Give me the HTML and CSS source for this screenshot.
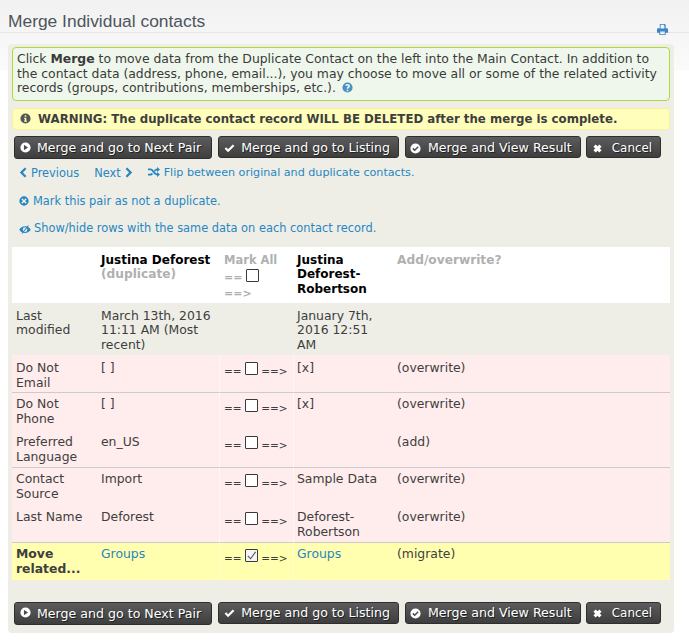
FILE: index.html
```html
<!DOCTYPE html>
<html lang="en">
<head>
  <meta charset="UTF-8" />
  <title>Merge Individual contacts</title>
  <link rel="stylesheet" href="styles.css">
</head>
<body>
  <svg class="sprite" width="0" height="0">
    <symbol id="i-play" viewBox="0 0 14 14"><path fill-rule="evenodd" d="M7 .5a6.5 6.5 0 1 0 0 13 6.500 6.500 0 0 0 0-13zM5 3.600l5.200 3.400L5 10.400z"/></symbol>
    <symbol id="i-check" viewBox="0 0 14 14"><path d="M5.200 11.800.8 7.400l2-2 2.400 2.400 6-6 2 2z"/></symbol>
    <symbol id="i-check-c" viewBox="0 0 14 14"><path fill-rule="evenodd" d="M7 .5a6.500 6.500 0 1 0 0 13 6.500 6.500 0 0 0 0-13zM6 10.600 2.900 7.500l1.400-1.400L6 7.800l3.700-3.700 1.400 1.400z"/></symbol>
    <symbol id="i-times" viewBox="0 0 14 14"><path d="M4.700 1.800 7 4.100l2.300-2.300 2.900 2.900L9.900 7l2.300 2.300-2.900 2.900L7 9.900l-2.300 2.300-2.900-2.900L4.100 7 1.800 4.700z"/></symbol>
    <symbol id="i-prev" viewBox="0 0 8 12"><path d="M6 .5 7.700 2.200 3.900 6l3.800 3.800L6 11.500.5 6z"/></symbol>
    <symbol id="i-next" viewBox="0 0 8 12"><path d="M2 .5.300 2.200 4.100 6 .3 9.800 2 11.500 7.500 6z"/></symbol>
    <symbol id="i-random" viewBox="0 0 12 10"><path d="M0 1.500h2.500c1.600 0 2.500 1 3.500 2.300C7 5 7.700 6.500 9 6.500V5l3 2.500L9 10V8.300c-2 0-3.200-1.500-4.300-3C3.900 4.200 3.300 3.300 2.400 3.300H0zM9 0l3 2.500L9 5V3.500c-.8 0-1.400.5-2 1.100L6 3.300C6.800 2.400 7.700 1.700 9 1.700zM0 6.700h2.400c.6 0 1-.4 1.500-.9l1.100 1.400C4.300 8 3.500 8.500 2.500 8.500H0z"/></symbol>
    <symbol id="i-times-c" viewBox="0 0 14 14"><path fill-rule="evenodd" d="M7 .5a6.500 6.500 0 1 0 0 13 6.500 6.500 0 0 0 0-13zM4.800 3.300 7 5.500l2.200-2.200 1.500 1.500L8.500 7l2.200 2.200-1.500 1.500L7 8.500l-2.200 2.200-1.500-1.500L5.500 7 3.300 4.800z"/></symbol>
    <symbol id="i-eye" viewBox="0 0 14 10"><path fill-rule="evenodd" d="M7 1.200C4 1.200 1.600 3 .3 5.200 1.600 7.400 4 9 7 9s5.400-1.600 6.700-3.800C12.400 3 10 1.200 7 1.200zm0 1.300a2.700 2.700 0 1 1 0 5.400 2.700 2.700 0 0 1 0-5.400z"/><path d="M10.500 0l1 .7L4 10l-1-.7z"/></symbol>
    <symbol id="i-print" viewBox="0 0 12 12"><path fill-rule="evenodd" d="M3 0h5.500L9.500 1v3.500h1.200c.7 0 1.300.6 1.300 1.300V9.500H9.500V12h-7V9.500H0V5.800c0-.7.600-1.300 1.300-1.300H3zm.9.900v4h4.200V2.200L7.300.900zM3.500 8.200v2.900h5V8.200z"/></symbol>
    <symbol id="i-help" viewBox="0 0 14 14"><path fill-rule="evenodd" d="M7 .5a6.500 6.500 0 1 0 0 13 6.500 6.500 0 0 0 0-13zM6 9.800h2v2H6zM7 2.500c1.900 0 3.200 1 3.200 2.500 0 1.100-.6 1.700-1.300 2.200-.6.400-.9.700-.9 1.500H6c0-1.300.5-2 1.300-2.600.5-.4.800-.6.800-1.100 0-.4-.4-.7-1.100-.7-.6 0-1.200.3-1.700.9L3.900 3.900C4.700 3 5.700 2.500 7 2.500z"/></symbol>
    <symbol id="i-info" viewBox="0 0 14 14"><path fill-rule="evenodd" d="M7 .5a6.500 6.500 0 1 0 0 13 6.500 6.500 0 0 0 0-13zM6 2.800h2v2H6zM5.300 6h2.700v4h.9v1.200H5.200V10H6V7.200h-.7z"/></symbol>
  </svg>

  <header class="page-head">
    <h1>Merge Individual contacts</h1>
    <a class="print" href="#"><svg class="ico"><use href="#i-print"/></svg></a>
  </header>

  <main class="panel">
    <div class="help">
      Click <strong>Merge</strong> to move data from the Duplicate Contact on the left into the Main Contact. In addition to the contact data (address, phone, email...), you may choose to move all or some of the related activity records (groups, contributions, memberships, etc.).
      <svg class="ico help-ico"><use href="#i-help"/></svg>
    </div>

    <div class="warning">
      <svg class="ico warn-ico"><use href="#i-info"/></svg>
      WARNING: The duplicate contact record WILL BE DELETED after the merge is complete.
    </div>

    <div class="buttons">
      <button class="btn btn-first" type="button"><svg class="ico"><use href="#i-play"/></svg>Merge and go to Next Pair</button>
      <button class="btn" type="button"><svg class="ico"><use href="#i-check"/></svg>Merge and go to Listing</button>
      <button class="btn btn-view" type="button"><svg class="ico"><use href="#i-check-c"/></svg>Merge and View Result</button>
      <button class="btn btn-cancel" type="button"><svg class="ico"><use href="#i-times"/></svg>Cancel</button>
    </div>

    <div class="nav-links">
      <a href="#"><svg class="ico chev"><use href="#i-prev"/></svg>Previous</a>
      <a href="#">Next<svg class="ico chev chev-r"><use href="#i-next"/></svg></a>
      <a class="flip" href="#"><svg class="ico rnd"><use href="#i-random"/></svg>Flip between original and duplicate contacts.</a>
    </div>
    <div class="link-row link-mark"><a href="#"><svg class="ico small"><use href="#i-times-c"/></svg>Mark this pair as not a duplicate.</a></div>
    <div class="link-row link-show"><a href="#"><svg class="ico eye"><use href="#i-eye"/></svg>Show/hide rows with the same data on each contact record.</a></div>

    <table class="merge">
      <colgroup>
        <col class="c-label"><col class="c-dup"><col class="c-mark"><col class="c-main"><col class="c-add">
      </colgroup>
      <thead>
        <tr>
          <th></th>
          <th><span class="name">Justina Deforest</span><br>(duplicate)</th>
          <th class="mark-all">Mark All<span class="arrows">== <span class="box box-head"></span><br>==&gt;</span></th>
          <th><span class="name">Justina Deforest-Robertson</span></th>
          <th>Add/overwrite?</th>
        </tr>
      </thead>
      <tbody>
        <tr class="row-plain">
          <td>Last modified</td>
          <td>March 13th, 2016 11:11 AM (Most recent)</td>
          <td></td>
          <td>January 7th, 2016 12:51 AM</td>
          <td></td>
        </tr>
        <tr class="row-diff line row-email">
          <td>Do Not Email</td>
          <td>[ ]</td>
          <td class="mark">== <span class="box"></span> ==&gt;</td>
          <td class="sep">[x]</td>
          <td>(overwrite)</td>
        </tr>
        <tr class="row-diff">
          <td>Do Not Phone</td>
          <td>[ ]</td>
          <td class="mark">== <span class="box"></span> ==&gt;</td>
          <td class="sep">[x]</td>
          <td>(overwrite)</td>
        </tr>
        <tr class="row-diff line row-lang">
          <td>Preferred Language</td>
          <td>en_US</td>
          <td class="mark">== <span class="box"></span> ==&gt;</td>
          <td class="sep"></td>
          <td>(add)</td>
        </tr>
        <tr class="row-diff">
          <td>Contact Source</td>
          <td>Import</td>
          <td class="mark">== <span class="box"></span> ==&gt;</td>
          <td class="sep">Sample Data</td>
          <td>(overwrite)</td>
        </tr>
        <tr class="row-diff line">
          <td>Last Name</td>
          <td>Deforest</td>
          <td class="mark">== <span class="box"></span> ==&gt;</td>
          <td class="sep">Deforest-Robertson</td>
          <td>(overwrite)</td>
        </tr>
        <tr class="row-move">
          <td><strong>Move related...</strong></td>
          <td><a href="#">Groups</a></td>
          <td class="mark">== <span class="box box-on"><svg viewBox="0 0 12 12"><path d="M2 6.500 5 9.500 10.500 2" fill="none" stroke="#555" stroke-width="1.200"/></svg></span> ==&gt;</td>
          <td class="sep"><a href="#">Groups</a></td>
          <td>(migrate)</td>
        </tr>
      </tbody>
    </table>

    <div class="buttons buttons-bottom">
      <button class="btn btn-first" type="button"><svg class="ico"><use href="#i-play"/></svg>Merge and go to Next Pair</button>
      <button class="btn" type="button"><svg class="ico"><use href="#i-check"/></svg>Merge and go to Listing</button>
      <button class="btn btn-view" type="button"><svg class="ico"><use href="#i-check-c"/></svg>Merge and View Result</button>
      <button class="btn btn-cancel" type="button"><svg class="ico"><use href="#i-times"/></svg>Cancel</button>
    </div>
  </main>
</body>
</html>
```

FILE: styles.css
```css
* {
  box-sizing: border-box;
  margin: 0;
  padding: 0;
}

body {
  font-family: "DejaVu Sans", Verdana, sans-serif;
  font-size: 12.4px;
  line-height: 14.5px;
  color: #3e3e3e;
  background: linear-gradient(#f1f1f1, #fbfbfb 70px, #fff 71px);
  height: 642px;
  overflow: hidden;
}

a {
  color: #2786c2;
  text-decoration: none;
}

.sprite {
  display: block;
}

.ico {
  display: inline-block;
  width: 14px;
  height: 14px;
  fill: currentColor;
  vertical-align: -2px;
}

.page-head {
  height: 33px;
  display: flex;
  justify-content: space-between;
  border-bottom: 1px solid #e6e6e6;
  padding: 11px 21px 0 8px;
}

.page-head h1 {
  font-family: "Liberation Sans", Arial, sans-serif;
  font-weight: normal;
  font-size: 17.4px;
  line-height: 20px;
  color: #4e545c;
}

.print {
  color: #3d85c6;
  padding-top: 13px;
  line-height: 0;
}

.print .ico {
  width: 11px;
  height: 11px;
  vertical-align: top;
}

.panel {
  margin: 11px 15px 0 8px;
  height: 589px;
  background: #eeeee6;
  border-radius: 4px;
  padding: 3px 4px 0;
}

.help {
  height: 54px;
  padding: 4px 4px;
  background: #eff7ec;
  border: 1px solid #aedb3c;
  border-radius: 4px;
  color: #3a3a3a;
}

.help-ico {
  width: 11px;
  height: 11px;
  margin-left: 2px;
  color: #4a90c4;
  vertical-align: -1px;
}

.warning {
  height: 22px;
  margin-top: 7px;
  padding: 3px 7px;
  background: #ffffbb;
  border: 1px solid #f4f39b;
  border-radius: 4px;
  font-size: 11.78px;
  font-weight: bold;
  color: #3e3e3e;
  white-space: nowrap;
}

.warn-ico {
  width: 11px;
  height: 11px;
  margin-right: 3px;
  color: #555;
  vertical-align: -1px;
}

.buttons {
  display: flex;
  align-items: flex-start;
  gap: 6px;
  margin: 6px 0 0 2px;
}

.buttons-bottom {
  margin-top: 22px;
}

.btn {
  display: flex;
  align-items: center;
  gap: 6px;
  height: 22px;
  padding: 2px 8px 0 5px;
  font: inherit;
  font-size: 12.6px;
  color: #fff;
  white-space: nowrap;
  text-shadow: 1px 1px 0 #222;
  background: linear-gradient(#5c5c5c, #3e3e3e);
  border: 1px solid #2e2e2e;
  border-radius: 3px;
}

.btn .ico {
  width: 11px;
  height: 11px;
}

.btn-first {
  height: 23px;
  padding-right: 10px;
}

.btn-first .ico {
  margin-bottom: 3px;
}

.btn-view {
  gap: 7px;
  padding: 2px 8px 0 4px;
}

.btn-cancel {
  gap: 9px;
  margin-left: -1px;
  font-size: 11.9px;
}

.nav-links {
  display: flex;
  gap: 15px;
  margin: 7px 0 0 7px;
  font-size: 11.4px;
}

.flip {
  font-size: 11.15px;
}

.chev {
  width: 8px;
  height: 11px;
  margin-right: 4px;
  vertical-align: -1px;
}

.chev-r {
  margin: 0 0 0 4px;
}

.rnd {
  width: 12px;
  height: 10px;
  margin-right: 4px;
  vertical-align: -1px;
}

.link-row {
  margin-left: 7px;
  font-size: 11.4px;
}

.link-mark {
  margin-top: 13px;
}

.link-show {
  margin-top: 13px;
}

.small {
  width: 10px;
  height: 10px;
  margin-right: 4px;
  vertical-align: -1px;
}

.eye {
  width: 12px;
  height: 9px;
  margin-right: 3px;
  vertical-align: -2px;
}

.merge {
  width: 658px;
  height: 333px;
  margin-top: 11px;
  table-layout: fixed;
  border-collapse: separate;
  border-spacing: 0;
}

.c-label { width: 85px; }
.c-dup { width: 122px; }
.c-mark { width: 74px; }
.c-main { width: 100px; }

.merge th,
.merge td {
  padding: 3px 4px 0;
  text-align: left;
  vertical-align: top;
}

.merge th {
  height: 56px;
  background: #fff;
  padding-top: 6px;
  color: #b0b0b0;
  font-size: 12.2px;
  font-weight: bold;
}

.merge .name {
  color: #000;
  font-size: 12px;
}

.merge .mark-all {
  padding-left: 5px;
  font-size: 11.5px;
  white-space: nowrap;
}

.arrows {
  display: block;
  margin-top: 2px;
  font-size: 11px;
  line-height: 16px;
}

.row-plain td {
  height: 52px;
  padding-top: 6px;
}

.row-diff td {
  height: 37px;
  line-height: 15px;
  background: #ffecec;
}

.row-diff.line td {
  height: 38px;
  padding-top: 4px;
  border-bottom: 1px solid #ccc;
}

.row-diff.row-email td {
  padding-top: 5px;
}

.row-move td {
  height: 37px;
  line-height: 15px;
  background: #ffffaf;
}

.merge .mark {
  white-space: nowrap;
  padding: 6px 0 0 4px;
  border-left: 1px solid #fff6f6;
  font-size: 10.5px;
}

.row-diff.line .mark {
  padding-top: 7px;
}

.row-diff.row-lang .mark {
  padding-top: 6px;
}

.merge .sep {
  padding-left: 3px;
  border-left: 1px solid #fff6f6;
}

.row-move .mark,
.row-move .sep {
  border-left-color: #ffffcc;
}

.box {
  display: inline-block;
  width: 13px;
  height: 13px;
  vertical-align: 0;
  background: #fff;
  border: 1px solid #3a3a3a;
  border-radius: 1px;
}

.box-head {
  vertical-align: -1px;
}

.box-on {
  background: #f4f4f4;
}

.box-on svg {
  display: block;
  width: 11px;
  height: 11px;
}
```
